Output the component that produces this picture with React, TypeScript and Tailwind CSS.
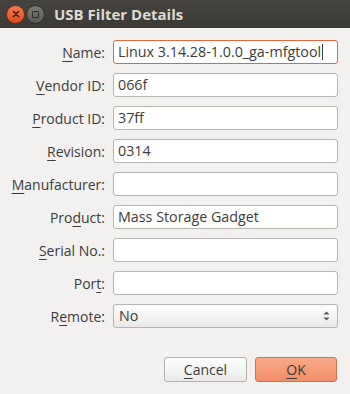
import React from "react";

const font = { fontFamily: '"Open Sans", "Noto Sans", sans-serif' };

function U({ children }: { children: React.ReactNode }) {
  return <span className="underline decoration-1 underline-offset-[3px]">{children}</span>;
}

function Label({ children }: { children: React.ReactNode }) {
  return (
    <div className="flex h-6 items-center justify-end whitespace-nowrap text-[14px] text-[#3c3c3c]">
      {children}
    </div>
  );
}

function Field({ value, focused }: { value?: string; focused?: boolean }) {
  return (
    <div
      className={
        "flex h-6 items-center rounded-[3px] border bg-white px-[4px] text-[14.3px] text-[#3c3c3c] " +
        (focused ? "border-[#e4673a]" : "border-[#b7b5b1]")
      }
    >
      <span className="whitespace-nowrap">{value}</span>
      {focused && <span className="ml-[1px] h-[16px] w-px bg-[#3c3c3c]" />}
    </div>
  );
}

export default function App() {
  return (
    <div className="h-[394px] w-[350px] overflow-hidden bg-[#f2f1f0]" style={font}>
      <div className="flex h-[28px] items-center bg-gradient-to-b from-[#45443f] to-[#3b3a36] pl-[6px]">
        <div className="flex h-[19px] w-[19px] items-center justify-center rounded-full border border-[#7a2d14] bg-gradient-to-b from-[#f37a4f] to-[#df4a1b]">
          <svg width="8" height="8" viewBox="0 0 8 8">
            <path d="M1.5 1.5 L6.5 6.5 M6.5 1.5 L1.5 6.5" stroke="#3a1a10" strokeWidth="1.6" strokeLinecap="round" />
          </svg>
        </div>
        <div className="ml-[1px] flex h-[19px] w-[19px] items-center justify-center rounded-full border border-[#2e2d2a] bg-gradient-to-b from-[#7c7b76] to-[#5a5955]">
          <div className="h-[7px] w-[7px] rounded-[1px] border-[1.5px] border-[#2f2e2b]" />
        </div>
        <div className="ml-[9px] text-[15px] font-bold text-[#dfdbd2]">USB Filter Details</div>
      </div>

      <div className="grid grid-cols-[93px_1fr] gap-x-2 gap-y-[9px] px-3 pt-3">
        <Label><U>N</U>ame:</Label>
        <Field value="Linux 3.14.28-1.0.0_ga-mfgtool" focused />
        <Label><U>V</U>endor ID:</Label>
        <Field value="066f" />
        <Label><U>P</U>roduct ID:</Label>
        <Field value="37ff" />
        <Label><U>R</U>evision:</Label>
        <Field value="0314" />
        <Label><U>M</U>anufacturer:</Label>
        <Field />
        <Label>Pro<U>d</U>uct:</Label>
        <Field value="Mass Storage Gadget" />
        <Label><U>S</U>erial No.:</Label>
        <Field />
        <Label>Por<U>t</U>:</Label>
        <Field />
        <Label>R<U>e</U>mote:</Label>
        <div className="flex h-6 items-center justify-between rounded-[3px] border border-[#b7b5b1] bg-gradient-to-b from-[#fdfdfd] to-[#ebeae8] pl-[5px] pr-[7px] text-[14.3px] text-[#3c3c3c]">
          <span>No</span>
          <svg width="7" height="12" viewBox="0 0 7 12">
            <path d="M0.5 4.5 L3.5 1.5 L6.5 4.5 Z" fill="#5a5a5a" />
            <path d="M0.5 7.5 L3.5 10.5 L6.5 7.5 Z" fill="#5a5a5a" />
          </svg>
        </div>
      </div>

      <div className="mt-[29px] flex justify-end gap-2 pr-[13px]">
        <div className="flex h-[25px] w-[83px] items-center justify-center rounded-[3px] border border-[#b1afab] bg-gradient-to-b from-[#fdfdfd] to-[#ecebea] text-[14px] text-[#3c3c3c]">
          <span><U>C</U>ancel</span>
        </div>
        <div className="flex h-[25px] w-[82px] items-center justify-center rounded-[3px] border border-[#d2734f] bg-gradient-to-b from-[#f8a888] to-[#f28f69] text-[14px] text-[#3c3c3c]">
          <span><U>O</U>K</span>
        </div>
      </div>
    </div>
  );
}
